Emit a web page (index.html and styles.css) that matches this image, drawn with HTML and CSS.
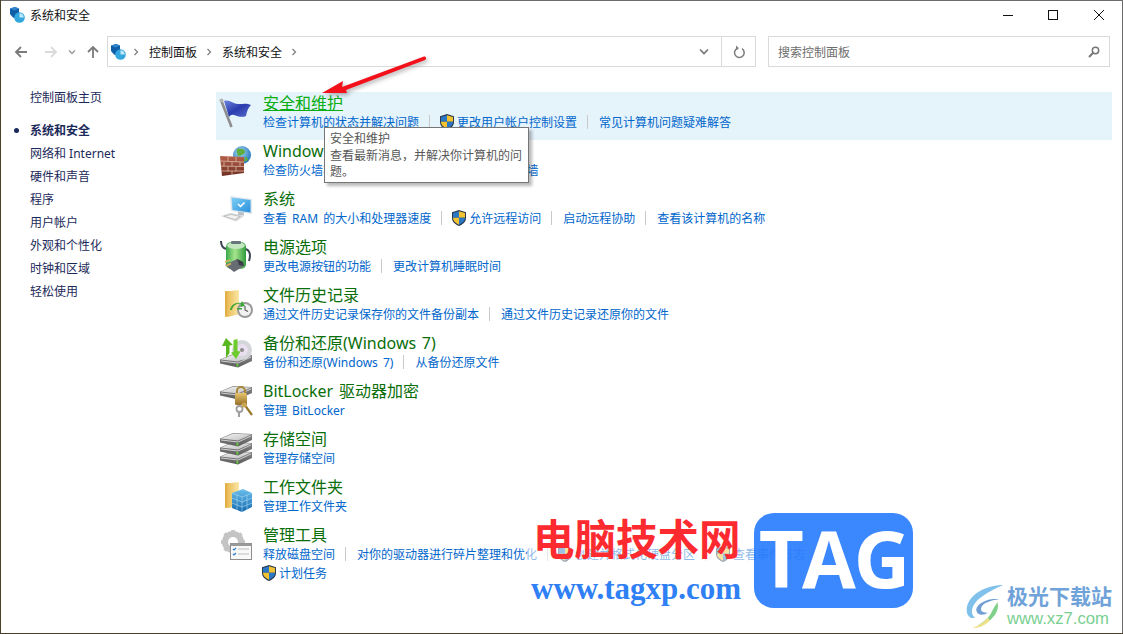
FILE: index.html
```html
<!DOCTYPE html>
<html lang="zh-CN">
<head>
<meta charset="utf-8">
<title>系统和安全</title>
<link rel="stylesheet" href="styles.css">
</head>
<body>
<svg class="defs" aria-hidden="true">
  <defs>
    <linearGradient id="gBlue" x1="0" y1="0" x2="1" y2="1"><stop offset="0" stop-color="#6f86e0"/><stop offset=".5" stop-color="#2a3cae"/><stop offset="1" stop-color="#5a6fd0"/></linearGradient>
    <linearGradient id="gBrick" x1="0" y1="0" x2="0" y2="1"><stop offset="0" stop-color="#b5614a"/><stop offset="1" stop-color="#6e2f22"/></linearGradient>
    <radialGradient id="gGlobe" cx=".4" cy=".35" r=".7"><stop offset="0" stop-color="#a8dcf5"/><stop offset="1" stop-color="#1c6fb8"/></radialGradient>
    <linearGradient id="gScreen" x1="0" y1="0" x2="1" y2="1"><stop offset="0" stop-color="#7fd0f5"/><stop offset="1" stop-color="#2a8fdc"/></linearGradient>
    <linearGradient id="gBat" x1="0" y1="0" x2="1" y2="0"><stop offset="0" stop-color="#3aa84a"/><stop offset=".45" stop-color="#a6e58d"/><stop offset="1" stop-color="#2f9a3c"/></linearGradient>
    <linearGradient id="gFold" x1="0" y1="0" x2="1" y2="0"><stop offset="0" stop-color="#e9bb55"/><stop offset="1" stop-color="#fbe7a6"/></linearGradient>
    <linearGradient id="gDrive" x1="0" y1="0" x2="0" y2="1"><stop offset="0" stop-color="#8a8a8a"/><stop offset="1" stop-color="#5c5c5c"/></linearGradient>
    <linearGradient id="gTop" x1="0" y1="0" x2="1" y2="1"><stop offset="0" stop-color="#f4f4f4"/><stop offset="1" stop-color="#bcbcbc"/></linearGradient>
    <linearGradient id="gLock" x1="0" y1="0" x2="0" y2="1"><stop offset="0" stop-color="#e6c56c"/><stop offset="1" stop-color="#97702a"/></linearGradient>
    <linearGradient id="gCube" x1="0" y1="0" x2="0" y2="1"><stop offset="0" stop-color="#6cc0ec"/><stop offset="1" stop-color="#1569ad"/></linearGradient>
    <symbol id="cp" viewBox="0 0 16 16">
      <path d="M1 1.500 6 0l4 1.600v5L8 12 4 10.500 1 7z" fill="#0f5fa8"/>
      <path d="M1 1.500 6 0l4 1.600L5.500 3.500z" fill="#2f86cc"/>
      <circle cx="10.500" cy="10.500" r="5.300" fill="#33a6dd"/>
      <path d="M10.500 10.500V6.200a4.300 4.300 0 0 1 4.300 4.300z" fill="#bfe8fa"/>
    </symbol>
    <symbol id="uac" viewBox="0 0 14 16">
      <path d="M7 0 14 2.300V8c0 4-3.400 6.500-7 8-3.600-1.500-7-4-7-8V2.300z" fill="#2a3a4e"/>
      <path d="M7 1.200V7.800H1V2.900z" fill="#2a78c4"/>
      <path d="M7 1.200 13 2.900V7.800H7z" fill="#f2c230"/>
      <path d="M1 7.800H7v6.900C4 13.400 1 11.300 1 7.800z" fill="#f2c230"/>
      <path d="M7 7.800h6c0 3.500-3 5.600-6 6.900z" fill="#2a78c4"/>
    </symbol>
    <symbol id="drive" viewBox="0 0 32 14">
      <path d="M0 5.500 13 0 32 1V7L18 13.500 0 9.500z" fill="url(#gDrive)"/>
      <path d="M.8 5.500 13 .7 31.200 1.500 18 7.500z" fill="url(#gTop)"/>
      <path d="M1 6.500 18 8.500 31 2.500V3.500L18 9.500 1 7.500z" fill="#cfcfcf"/>
      <rect x="16.500" y="10" width="1.800" height="2.600" fill="#5fd030"/>
    </symbol>
  </defs>
</svg>

<div class="window">
  <header class="titlebar">
    <div class="title">
      <svg class="ico16"><use href="#cp"/></svg>
      <span>系统和安全</span>
    </div>
    <div class="controls">
      <svg class="ctl" viewBox="0 0 10 10"><path d="M0 5.500h10" stroke="#111" fill="none"/></svg>
      <svg class="ctl" viewBox="0 0 10 10"><rect x=".5" y=".5" width="9" height="9" stroke="#111" fill="none"/></svg>
      <svg class="ctl" viewBox="0 0 10 10"><path d="M0 0 10 10M10 0 0 10" stroke="#111" fill="none"/></svg>
    </div>
  </header>

  <div class="toolbar">
    <div class="nav">
      <svg class="nav-ico" viewBox="0 0 14 14"><path d="M13 7H2M7 2 2 7l5 5" stroke="#7a7a7a" stroke-width="1.800" fill="none"/></svg>
      <svg class="nav-ico" viewBox="0 0 14 14"><path d="M1 7h11M7 2l5 5-5 5" stroke="#dadada" stroke-width="1.800" fill="none"/></svg>
      <svg class="nav-drop" viewBox="0 0 8 6"><path d="M1 1.500 4 4.500l3-3" stroke="#9a9a9a" stroke-width="1.400" fill="none"/></svg>
      <svg class="nav-ico" viewBox="0 0 14 14"><path d="M7 13V2M2 7l5-5 5 5" stroke="#7a7a7a" stroke-width="1.800" fill="none"/></svg>
    </div>
    <div class="address">
      <div class="crumbs">
        <svg class="ico16"><use href="#cp"/></svg>
        <svg class="chev" viewBox="0 0 6 10"><path d="M1.500 2 4.500 5l-3 3" stroke="#808080" stroke-width="1.300" fill="none"/></svg>
        <span>控制面板</span>
        <svg class="chev" viewBox="0 0 6 10"><path d="M1.500 2 4.500 5l-3 3" stroke="#808080" stroke-width="1.300" fill="none"/></svg>
        <span>系统和安全</span>
        <svg class="chev" viewBox="0 0 6 10"><path d="M1.500 2 4.500 5l-3 3" stroke="#808080" stroke-width="1.300" fill="none"/></svg>
      </div>
      <div class="addr-drop"><svg class="drop-ico" viewBox="0 0 10 7"><path d="M1 1.500 5 5.500l4-4" stroke="#777" stroke-width="1.700" fill="none"/></svg></div>
      <div class="addr-refresh"><svg class="refresh-ico" viewBox="0 0 12 14"><path d="M4.500 3.200A4.800 4.800 0 1 0 9 3.600" stroke="#7d7d7d" stroke-width="1.500" fill="none"/><path d="M3 .5 6 3.200 3 5.200z" fill="#7d7d7d"/></svg></div>
    </div>
    <div class="search">
      <span>搜索控制面板</span>
      <svg class="search-ico" viewBox="0 0 12 12"><circle cx="7.500" cy="4.500" r="3.200" stroke="#777" stroke-width="1.500" fill="none"/><path d="M5 7 1 11" stroke="#777" stroke-width="2" fill="none"/></svg>
    </div>
  </div>

  <div class="main">
    <nav class="side">
      <a class="side-home">控制面板主页</a>
      <ul class="side-list">
        <li class="current">系统和安全</li>
        <li>网络和 Internet</li>
        <li>硬件和声音</li>
        <li>程序</li>
        <li>用户帐户</li>
        <li>外观和个性化</li>
        <li>时钟和区域</li>
        <li>轻松使用</li>
      </ul>
    </nav>

    <section class="tasks">
      <article class="task hover">
        <svg class="task-ico" viewBox="0 0 36 36">
          <path d="M3 3 13.500 30" stroke="#8d8d8d" stroke-width="2.600" fill="none"/>
          <circle cx="3.500" cy="3.500" r="2" fill="#b5b5b5"/>
          <path d="M6 4c5-2 9 3 14 3 5 0 9-1 13 1-3 3-4 6-5 11-4 2-9 0-12-1-3-1-4 1-5 2z" fill="url(#gBlue)"/>
        </svg>
        <div class="body">
          <h2 class="head">安全和维护</h2>
          <div class="links"><a>检查计算机的状态并解决问题</a><i class="sep"></i><svg class="shield"><use href="#uac"/></svg><a>更改用户帐户控制设置</a><i class="sep"></i><a>常见计算机问题疑难解答</a></div>
        </div>
      </article>

      <article class="task">
        <svg class="task-ico" viewBox="0 0 36 36">
          <circle cx="24" cy="10" r="9" fill="url(#gGlobe)"/>
          <path d="M19 4c3-1 7 0 8 2s-3 4-5 5-4-3-3-7zM27 12c2 0 3 1 3 3l-4 2z" fill="#5fae3f"/>
          <path d="M2 11 26 12v16L4 31z" fill="url(#gBrick)"/>
          <path d="M2.500 16 26 17M3 21l23 .5M3.500 26 26 26M10 11.500v5M18 12v5M6 17v4.500M14 17v4.500M22 17v4.500M10 21.500v5M18 21.500v5M14 26v4" stroke="#e0b7a4" stroke-width=".8" fill="none"/>
        </svg>
        <div class="body">
          <h2 class="head">Windows Defender 防火墙</h2>
          <div class="links"><a>检查防火墙状态</a><i class="sep"></i><a>允许应用通过 Windows 防火墙</a></div>
        </div>
      </article>

      <article class="task">
        <svg class="task-ico" viewBox="0 0 36 36">
          <path d="M12 3 34 6V21L13 18z" fill="#dfe6ec"/>
          <path d="M13.500 4.500 32.500 7V19.500L14.500 17z" fill="url(#gScreen)"/>
          <path d="M20 11l2.500 2.500 4-4" stroke="#fff" stroke-width="1.500" fill="none"/>
          <path d="M20 18.500l6 1v3l-6-.5z" fill="#b9c0c6"/>
          <path d="M3 23 13 20 26 23 18 28.500z" fill="#d4d6d8"/>
          <path d="M6 23.200 13 21.500 22 23.500 17 26.500z" fill="#f2f2f2" stroke="#a5a5a5" stroke-width=".5"/>
        </svg>
        <div class="body">
          <h2 class="head">系统</h2>
          <div class="links"><a>查看 RAM 的大小和处理器速度</a><i class="sep"></i><svg class="shield"><use href="#uac"/></svg><a>允许远程访问</a><i class="sep"></i><a>启动远程协助</a><i class="sep"></i><a>查看该计算机的名称</a></div>
        </div>
      </article>

      <article class="task">
        <svg class="task-ico" viewBox="0 0 36 36">
          <path d="M3 0c0 5 2 7 5 8M26 8c6 0 7 6 5 12" stroke="#3a4450" stroke-width="2" fill="none"/>
          <rect x="8" y="1" width="20" height="27" rx="5" fill="url(#gBat)"/>
          <ellipse cx="18" cy="4.500" rx="9" ry="3.500" fill="#c3e5c0"/>
          <rect x="13" y="0" width="10" height="3" rx="1" fill="#69747a"/>
          <path d="M7 24 19 18 25 21 26 25 16 31z" fill="#666c72"/>
          <path d="M19 18 25 21 26 25 21 24z" fill="#3a4046"/>
          <path d="M7 21 12 19M8 25 13 22.500" stroke="#d9b45a" stroke-width="1.600" fill="none"/>
        </svg>
        <div class="body">
          <h2 class="head">电源选项</h2>
          <div class="links"><a>更改电源按钮的功能</a><i class="sep"></i><a>更改计算机睡眠时间</a></div>
        </div>
      </article>

      <article class="task">
        <svg class="task-ico" viewBox="0 0 36 36">
          <path d="M7 2 21 3V25L7 28z" fill="#e2ae46"/>
          <path d="M9 2.500 21 1V25L9 28z" fill="url(#gFold)"/>
          <circle cx="27" cy="21" r="8" fill="#9a9a9a"/>
          <circle cx="27" cy="21" r="6" fill="#f1f1f1"/>
          <path d="M27 17v4l3 1.500" stroke="#555" stroke-width="1.100" fill="none"/>
          <path d="M14 21c1-5 5-7 9-6l-1 3 5-1-3-5-1 2c-6-1-10 2-11 7z" fill="#3fa53a"/>
          <path d="M19 19h5v1.500h-5z" fill="#3fa53a"/>
        </svg>
        <div class="body">
          <h2 class="head">文件历史记录</h2>
          <div class="links"><a>通过文件历史记录保存你的文件备份副本</a><i class="sep"></i><a>通过文件历史记录还原你的文件</a></div>
        </div>
      </article>

      <article class="task">
        <svg class="task-ico" viewBox="0 0 36 36">
          <use href="#drive" x="2" y="17" width="32" height="14"/>
          <circle cx="24" cy="13" r="10" fill="#d4d6da"/>
          <circle cx="24" cy="13" r="6" fill="#eadfee"/>
          <circle cx="24" cy="13" r="2" fill="#8a8a8a"/>
          <path d="M8 1 15 8l-3.500.5V16L8 21 8 9 4 9z" fill="#58b71f"/>
          <path d="M18 22l-5-6.500 2.500-.5V3l4-1v12l3 .5z" fill="#6ecb2c"/>
        </svg>
        <div class="body">
          <h2 class="head">备份和还原(Windows 7)</h2>
          <div class="links"><a>备份和还原(Windows 7)</a><i class="sep"></i><a>从备份还原文件</a></div>
        </div>
      </article>

      <article class="task">
        <svg class="task-ico" viewBox="0 0 36 36">
          <use href="#drive" x="2" y="1" width="32" height="14"/>
          <path d="M19 9V6a4 4 0 0 1 8 0v3" stroke="#a8873a" stroke-width="2" fill="none"/>
          <rect x="17" y="8" width="12" height="12" rx="1.500" fill="url(#gLock)"/>
          <circle cx="21.500" cy="24" r="3" fill="none" stroke="#9e9e9e" stroke-width="1.800"/>
          <path d="M21 27v5" stroke="#9e9e9e" stroke-width="2"/>
          <path d="M26 19 34 30" stroke="#9a7a2e" stroke-width="2.200"/>
          <circle cx="26" cy="20" r="2.500" fill="#c8a852"/>
        </svg>
        <div class="body">
          <h2 class="head">BitLocker 驱动器加密</h2>
          <div class="links"><a>管理 BitLocker</a></div>
        </div>
      </article>

      <article class="task">
        <svg class="task-ico" viewBox="0 0 36 36">
          <use href="#drive" x="2" y="18" width="32" height="14"/>
          <use href="#drive" x="2" y="9" width="32" height="14"/>
          <use href="#drive" x="2" y="0" width="32" height="14"/>
        </svg>
        <div class="body">
          <h2 class="head">存储空间</h2>
          <div class="links"><a>管理存储空间</a></div>
        </div>
      </article>

      <article class="task">
        <svg class="task-ico" viewBox="0 0 36 36">
          <path d="M7 2 21 3V25L7 27z" fill="#e2ae46"/>
          <path d="M9 2.500 21 1V25L9 27z" fill="url(#gFold)"/>
          <path d="M14 12 25 8 34 12V26L24 31 14 27z" fill="url(#gCube)"/>
          <path d="M14 12 24 16 34 12M24 16V31M14 17l10 4 10-4M14 22l10 4 10-4M19 14v15M29 14v15" stroke="#a6dcf6" stroke-width=".6" fill="none"/>
        </svg>
        <div class="body">
          <h2 class="head">工作文件夹</h2>
          <div class="links"><a>管理工作文件夹</a></div>
        </div>
      </article>

      <article class="task">
        <svg class="task-ico" viewBox="0 0 36 36">
          <circle cx="15" cy="13" r="8" fill="none" stroke="#c4c4c4" stroke-width="6"/>
          <path d="M15 1v4M15 21v4M3 13h4M23 13h4M6.500 4.500l3 3M20.500 18.500l3 3M23.500 4.500l-3 3M9.500 18.500l-3 3" stroke="#c4c4c4" stroke-width="3.500"/>
          <rect x="12.500" y="14.500" width="21" height="16" fill="#f8f8f8" stroke="#8f8f8f"/>
          <rect x="12.500" y="14.500" width="21" height="2.500" fill="#9a9a9a"/>
          <path d="M15 20l1 1 2-2M15 25l1 1 2-2" stroke="#2a80d0" stroke-width="1.200" fill="none"/>
          <path d="M20 20h11M20 25h11" stroke="#bdbdbd" stroke-width="1"/>
        </svg>
        <div class="body">
          <h2 class="head">管理工具</h2>
          <div class="links"><a>释放磁盘空间</a><i class="sep"></i><a>对你的驱动器进行碎片整理和优化</a><i class="sep"></i><svg class="shield"><use href="#uac"/></svg><a>创建并格式化硬盘分区</a><i class="sep"></i><svg class="shield"><use href="#uac"/></svg><a>查看事件日志</a></div>
          <div class="links"><svg class="shield first"><use href="#uac"/></svg><a>计划任务</a></div>
        </div>
      </article>
    </section>
  </div>
</div>

<div class="tooltip">
  <p>安全和维护</p>
  <p>查看最新消息，并解决你计算机的问题。</p>
</div>

<svg class="arrow" viewBox="0 0 115 50">
  <path d="M4 43 25 31 24 37 106 6.500C108 6 109 9 107 10L28 40 29 43z" fill="#f2101a"/>
</svg>

<div class="veil"></div>
<div class="mark-cn">电脑技术网</div>
<div class="mark-url">www.tagxp.com</div>
<div class="mark-tag">TAG</div>
<div class="mark-site">
  <svg class="swirl" viewBox="0 0 42 48">
    <path d="M40 2C22 2 4 12 2 26c-1 8 4 12 9 10C5 33 6 22 18 14 25 9 33 5 40 2z" fill="#7fc1ea"/>
    <path d="M36 17C24 15 11 22 12 29c1 5 8 5 12 2-4 0-8-1-7-5 1-5 10-8 19-9z" fill="#6f9fd4"/>
    <path d="M34 20c3 10-7 22-22 26 4-4 12-8 15-14 2-4 4-8 7-12z" fill="#7ed08a"/>
    <path d="M24 36C20 41 14 45 8 47c6 0 14-3 18-8z" fill="#efe08a"/>
  </svg>
  <div class="site-text">
    <div class="site-cn">极光下载站</div>
    <div class="site-url">www.xz7.com</div>
  </div>
</div>
</body>
</html>
```

FILE: styles.css
```css
* { box-sizing: border-box; }

html, body {
  margin: 0;
  height: 100%;
}

body {
  background: #4a4126;
  font-family: "Noto Sans", "Noto Sans CJK SC", sans-serif;
  font-size: 12px;
  overflow: hidden;
  position: relative;
}

.defs {
  position: absolute;
  width: 0;
  height: 0;
}

.window {
  margin: 0 0 1px 1px;
  height: 633px;
  background: #fff;
  border-top: 1px solid #6b6b6b;
  border-right: 1px solid #6b6b6b;
  display: flex;
  flex-direction: column;
}

.titlebar {
  height: 35px;
  flex: none;
  display: flex;
  justify-content: space-between;
  padding: 6px 18px 0 8px;
}

.title {
  display: flex;
  align-items: center;
  gap: 5px;
  height: 16px;
  color: #111;
}

.ico16 {
  width: 16px;
  height: 16px;
  flex: none;
}

.controls {
  display: flex;
  gap: 35px;
  padding-top: 3px;
}

.ctl {
  width: 10px;
  height: 10px;
}

.ctl:last-child {
  margin-left: 1px;
}

.toolbar {
  flex: none;
  height: 31px;
  display: flex;
  padding-left: 13px;
  padding-right: 12px;
}

.nav {
  width: 93px;
  display: flex;
  align-items: center;
}

.nav-ico {
  width: 14px;
  height: 14px;
  flex: none;
}

.nav-ico:nth-child(2) {
  margin-left: 16px;
}

.nav-drop {
  width: 8px;
  height: 6px;
  margin-left: 10px;
  flex: none;
}

.nav-ico:nth-child(4) {
  margin-left: 10px;
}

.address {
  width: 649px;
  height: 31px;
  flex: none;
  border: 1px solid #d9d9d9;
  display: flex;
  align-items: center;
}

.crumbs {
  flex: 1;
  display: flex;
  align-items: center;
  color: #111;
  padding-left: 2px;
}

.chev {
  width: 6px;
  height: 10px;
  margin: 0 10px 0 9px;
  flex: none;
}

.crumbs .ico16 + .chev {
  margin-left: 7px;
}

.addr-drop {
  width: 35px;
  height: 100%;
  display: flex;
  align-items: center;
  justify-content: center;
}

.drop-ico {
  width: 10px;
  height: 7px;
}

.addr-refresh {
  width: 34px;
  height: 100%;
  border-left: 1px solid #d9d9d9;
  display: flex;
  align-items: center;
  justify-content: center;
}

.refresh-ico {
  width: 12px;
  height: 14px;
}

.search {
  width: 342px;
  height: 31px;
  margin-left: 12px;
  flex: none;
  border: 1px solid #d9d9d9;
  display: flex;
  align-items: center;
  justify-content: space-between;
  padding: 0 9px 0 9px;
  color: #6d6d6d;
}

.search-ico {
  width: 12px;
  height: 12px;
}

.main {
  flex: 1;
  display: flex;
  min-height: 0;
}

.side {
  width: 215px;
  flex: none;
  padding: 21px 0 0 29px;
  color: #1b2a5a;
}

.side-home {
  display: block;
  line-height: 20px;
}

.side-list {
  list-style: none;
  margin: 13px 0 0;
  padding: 0;
}

.side-list li {
  height: 23px;
  line-height: 20px;
  position: relative;
}

.side-list .current {
  font-weight: 700;
}

.side-list .current::before {
  content: "";
  position: absolute;
  left: -16px;
  top: 7px;
  width: 5px;
  height: 5px;
  border-radius: 50%;
  background: #1b2a5a;
}

.tasks {
  width: 896px;
  flex: none;
  padding-top: 25px;
}

.task {
  height: 48px;
  display: flex;
  padding: 1px 0 0 2px;
}

.task.hover {
  background: #e5f3fb;
}

.task-ico {
  width: 36px;
  height: 36px;
  margin-top: 4px;
  flex: none;
}

.body {
  margin-left: 9px;
  min-width: 0;
}

.head {
  margin: 0;
  font-size: 16px;
  font-weight: 400;
  line-height: 21px;
  color: #0a6e0a;
  word-spacing: 1.500px;
}

.hover .head {
  color: #08ae12;
  text-decoration: underline;
}

.links {
  display: flex;
  align-items: center;
  height: 20px;
  margin-top: -2px;
  color: #0066cc;
  white-space: nowrap;
  word-spacing: 2px;
}

.links + .links {
  margin-top: -1px;
}

.sep {
  width: 1px;
  height: 14px;
  background: #c9c9c9;
  margin: 0 11px 0 10px;
  flex: none;
}

.shield {
  width: 14px;
  height: 16px;
  margin: 0 3px 0 -1px;
  flex: none;
}

.tooltip {
  position: absolute;
  left: 324px;
  top: 127px;
  width: 205px;
  height: 56px;
  padding: 3px 5px;
  background: #fff;
  border: 1px solid #767676;
  box-shadow: 3px 3px 3px rgba(0, 0, 0, .28);
  color: #575757;
  line-height: 16.500px;
}

.tooltip p {
  margin: 0;
}

.arrow {
  position: absolute;
  left: 318px;
  top: 50px;
  width: 115px;
  height: 50px;
  filter: drop-shadow(2px 2px 2px rgba(0, 0, 0, .3));
}

.veil {
  position: absolute;
  left: 527px;
  top: 515px;
  width: 227px;
  height: 95px;
  background: rgba(255, 255, 255, .55);
}

.mark-cn {
  position: absolute;
  left: 533px;
  top: 510px;
  font-size: 41.500px;
  line-height: 58px;
  font-weight: 700;
  color: #fd2a2f;
  white-space: nowrap;
}

.mark-url {
  position: absolute;
  left: 531px;
  top: 571px;
  font-family: "Liberation Serif", serif;
  font-size: 31px;
  line-height: 36px;
  font-weight: 700;
  color: #2f80f5;
  white-space: nowrap;
}

.mark-tag {
  position: absolute;
  left: 754px;
  top: 513px;
  width: 159px;
  height: 95px;
  border-radius: 20px;
  background: rgba(47, 128, 253, .94);
  color: #fff;
  font-family: "Open Sans", sans-serif;
  font-weight: 700;
  font-size: 78px;
  line-height: 91px;
  letter-spacing: -2px;
  text-align: center;
}

.mark-site {
  position: absolute;
  left: 964px;
  top: 583px;
  display: flex;
  gap: 1px;
}

.swirl {
  width: 42px;
  height: 46px;
  flex: none;
}

.site-cn {
  font-size: 21px;
  line-height: 26px;
  font-weight: 700;
  color: #6fa2d8;
  white-space: nowrap;
}

.site-url {
  font-family: "Liberation Sans", sans-serif;
  font-size: 16.700px;
  line-height: 20px;
  color: #78cf90;
  white-space: nowrap;
}
```
